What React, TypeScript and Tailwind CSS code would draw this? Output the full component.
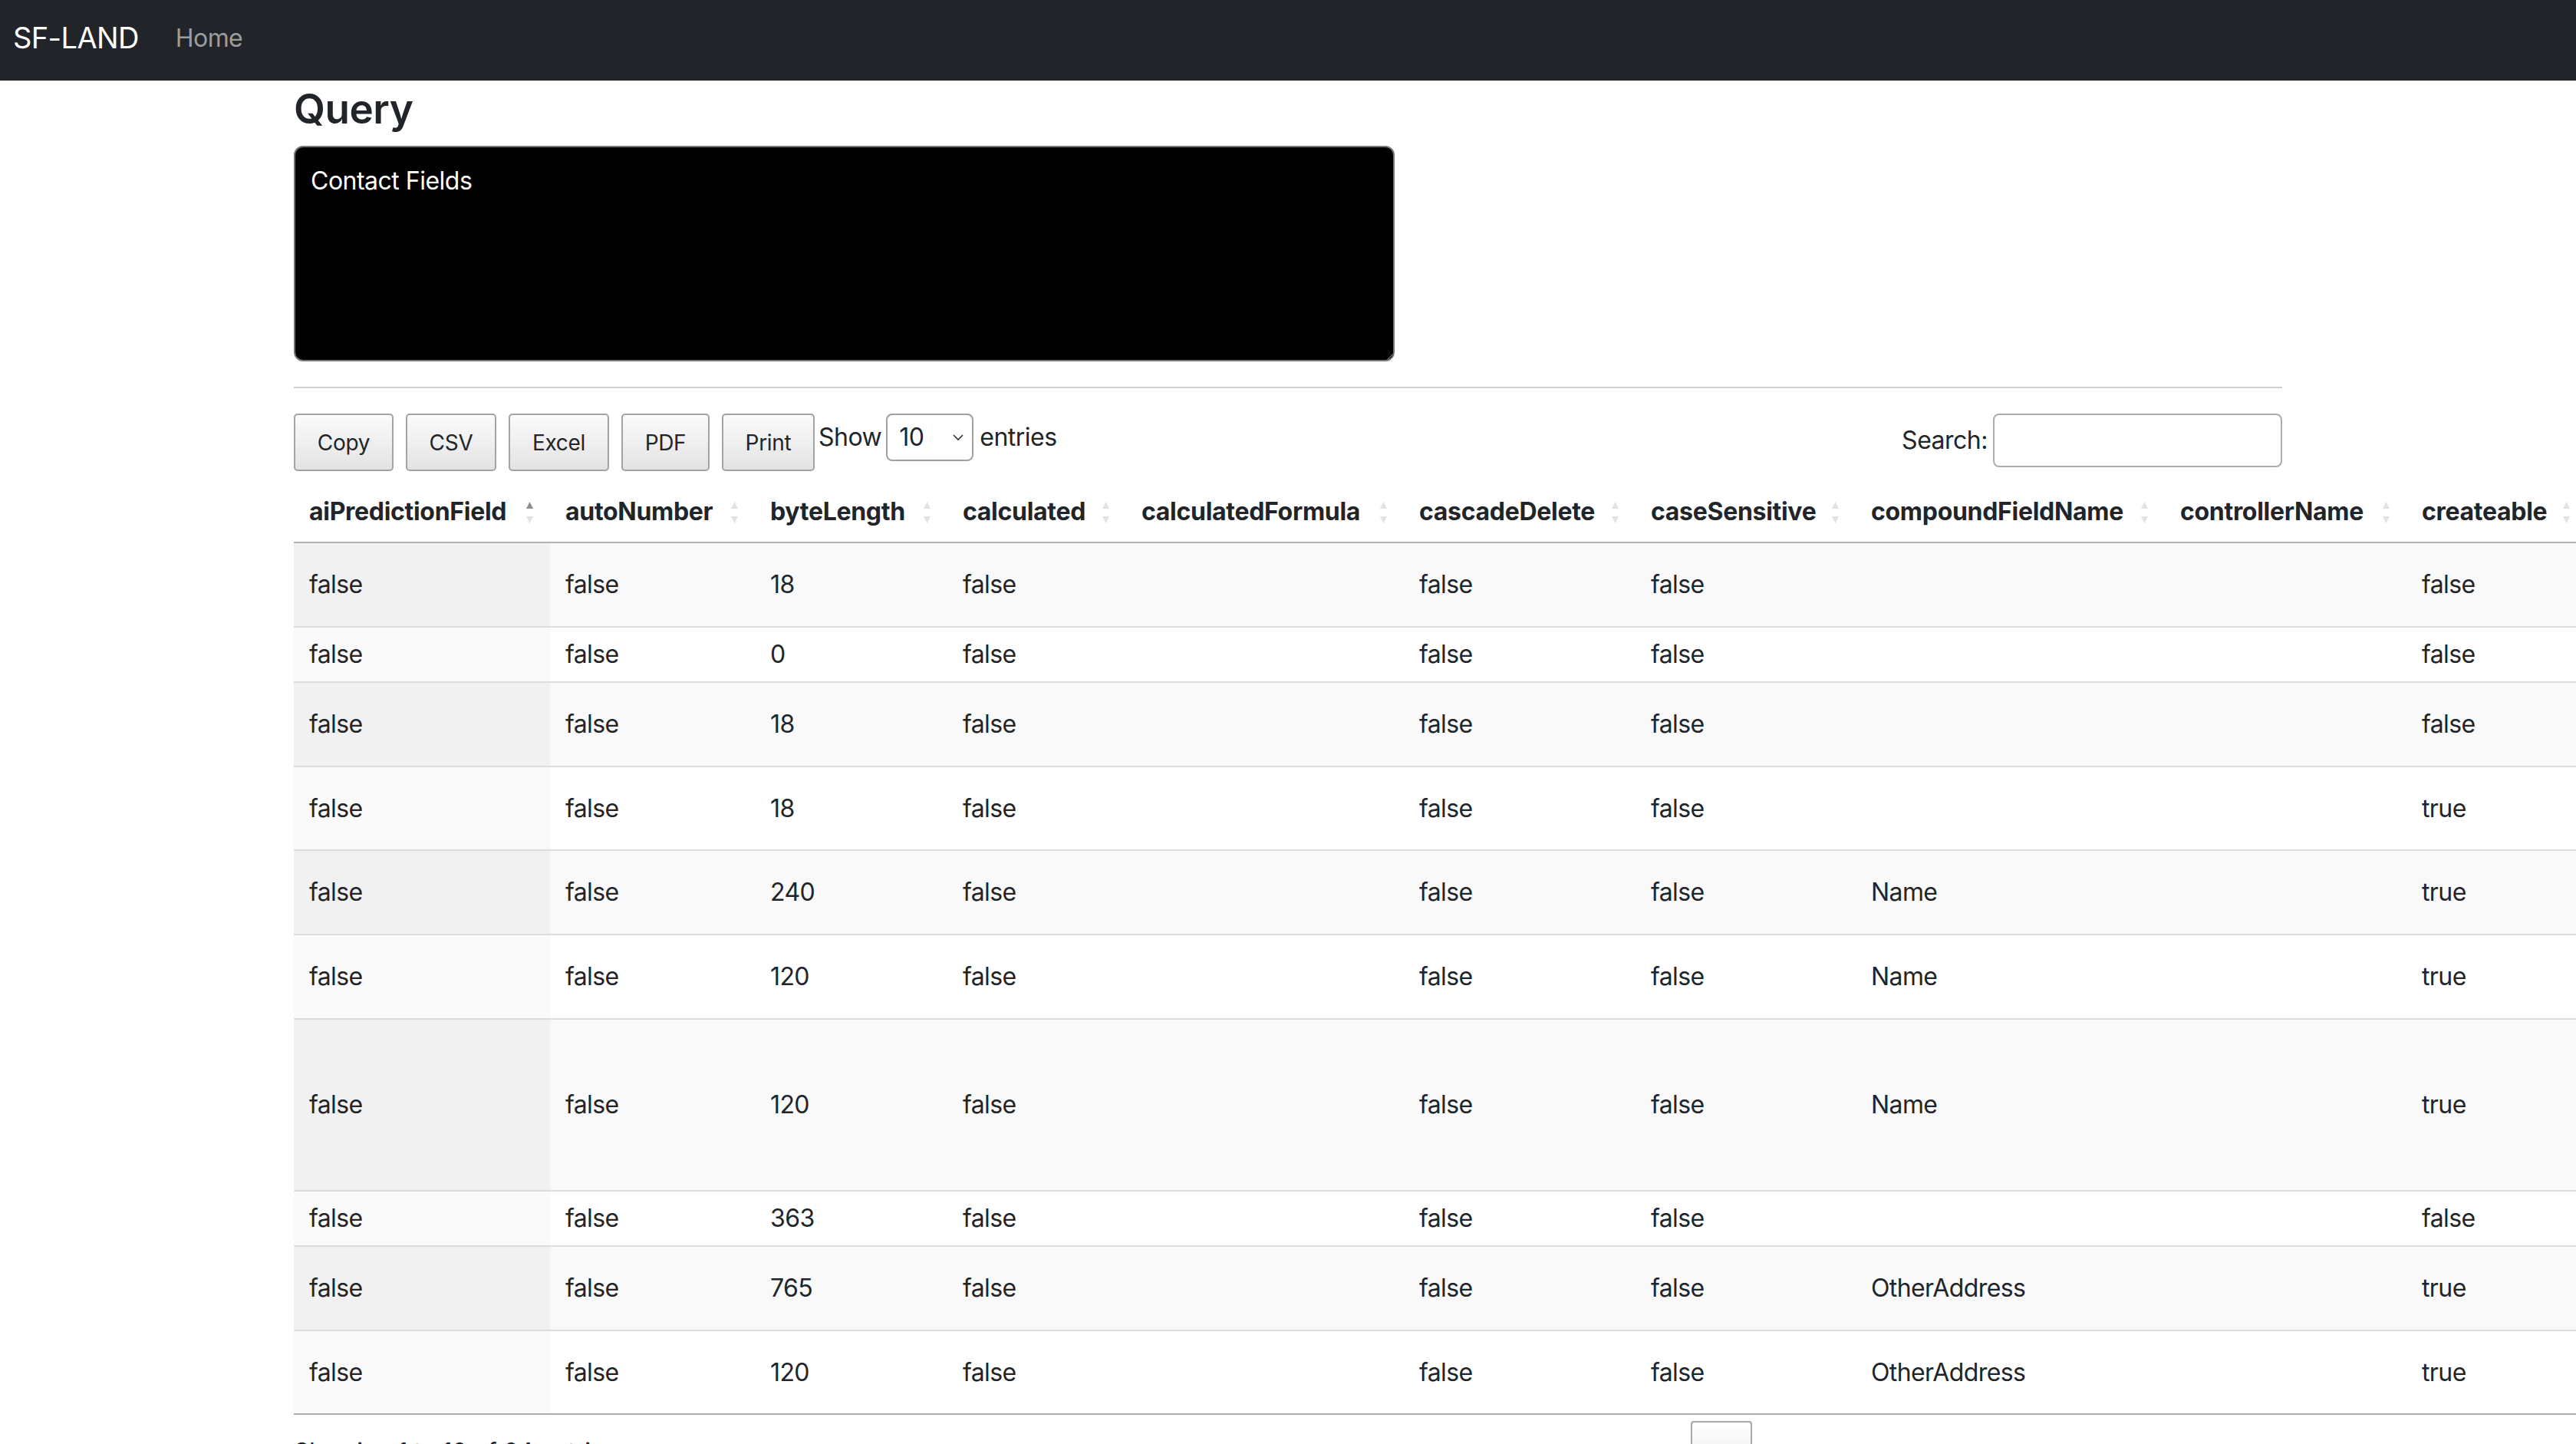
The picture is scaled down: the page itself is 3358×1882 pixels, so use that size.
import React from "react";

type Col = { key: string; label: string; w: string };

const cols: Col[] = [
  { key: "aiPredictionField", label: "aiPredictionField", w: "w-[334px]" },
  { key: "autoNumber", label: "autoNumber", w: "w-[267px]" },
  { key: "byteLength", label: "byteLength", w: "w-[251px]" },
  { key: "calculated", label: "calculated", w: "w-[233px]" },
  { key: "calculatedFormula", label: "calculatedFormula", w: "w-[362px]" },
  { key: "cascadeDelete", label: "cascadeDelete", w: "w-[302px]" },
  { key: "caseSensitive", label: "caseSensitive", w: "w-[287px]" },
  { key: "compoundFieldName", label: "compoundFieldName", w: "w-[403px]" },
  { key: "controllerName", label: "controllerName", w: "w-[315px]" },
  { key: "createable", label: "createable", w: "w-[235px]" },
  { key: "custom", label: "custom", w: "w-[200px]" },
  { key: "defaultValue", label: "defaultValue", w: "w-[300px]" },
];

type Row = { h: string; v: string[] };

const rows: Row[] = [
  { h: "h-[108px]", v: ["false", "false", "18", "false", "", "false", "false", "", "", "false", "false", ""] },
  { h: "h-[72px]", v: ["false", "false", "0", "false", "", "false", "false", "", "", "false", "false", ""] },
  { h: "h-[110px]", v: ["false", "false", "18", "false", "", "false", "false", "", "", "false", "false", ""] },
  { h: "h-[109px]", v: ["false", "false", "18", "false", "", "false", "false", "", "", "true", "false", ""] },
  { h: "h-[110px]", v: ["false", "false", "240", "false", "", "false", "false", "Name", "", "true", "false", ""] },
  { h: "h-[110px]", v: ["false", "false", "120", "false", "", "false", "false", "Name", "", "true", "false", ""] },
  { h: "h-[224px]", v: ["false", "false", "120", "false", "", "false", "false", "Name", "", "true", "false", ""] },
  { h: "h-[72px]", v: ["false", "false", "363", "false", "", "false", "false", "", "", "false", "false", ""] },
  { h: "h-[110px]", v: ["false", "false", "765", "false", "", "false", "false", "OtherAddress", "", "true", "false", ""] },
  { h: "h-[109px]", v: ["false", "false", "120", "false", "", "false", "false", "OtherAddress", "", "true", "false", ""] },
];

function SortIcon({ active }: { active: boolean }) {
  return (
    <svg
      className="absolute top-[26px] right-[22px] w-[9px] h-[29px]"
      viewBox="0 0 9 29"
    >
      <polygon points="0,9 4.5,0 9,9" fill={active ? "#8e8e8e" : "#e2e2e2"} />
      <polygon points="0,19 9,19 4.5,28" fill="#e2e2e2" />
    </svg>
  );
}

const buttons = [
  { label: "Copy", w: "w-[130px]" },
  { label: "CSV", w: "w-[118px]" },
  { label: "Excel", w: "w-[131px]" },
  { label: "PDF", w: "w-[115px]" },
  { label: "Print", w: "w-[121px]" },
];

export default function App() {
  return (
    <div className="w-[3358px] h-[1882px] overflow-hidden bg-white text-[#212529] font-[Inter,sans-serif]">
      <nav className="h-[105px] bg-[#212529] flex items-center pl-[17px] pb-[8px]">
        <span className="text-[38px] leading-[60px] tracking-[-0.6px] text-white mr-[32px]">SF-LAND</span>
        <span className="text-[32px] leading-[48px] tracking-[-0.6px] text-[#9b9d9f] px-[16px] mt-[2px]">Home</span>
      </nav>

      <div className="w-[2640px] mx-auto px-[24px]">
        <h3 className="text-[53px] font-semibold leading-[62px] tracking-[-0.5px] mt-[6px] mb-[17px]">Query</h3>

        <textarea
          className="block w-[1435px] h-[281px] bg-black text-white text-[32px] leading-[48px] tracking-[-0.5px] border-2 border-[#767676] rounded-[12px] pt-[20px] px-[20px] outline-none font-[Inter,sans-serif]"
          defaultValue="Contact Fields"
        />

        <hr className="mt-[33px] mb-[33px] border-0 border-t-2 border-[#cfcfcf]" />

        <div className="flex items-start justify-between">
          <div className="flex items-start">
            <div className="flex gap-[16px]">
              {buttons.map((b) => (
                <button
                  key={b.label}
                  className={`${b.w} h-[75px] border-2 border-[#a3a3a3] rounded-[5px] bg-linear-to-b from-[#fbfbfb] to-[#e3e3e3] text-[28px] tracking-[-0.3px] text-[#212529] flex items-center justify-center`}
                >
                  {b.label}
                </button>
              ))}
            </div>
            <div className="flex items-center h-[62px] ml-[5px] text-[32px] tracking-[-0.5px]">
              <span>Show</span>
              <div className="ml-[6px] w-[114px] h-[62px] border-2 border-[#a0a0a0] rounded-[8px] bg-white flex items-center justify-between pl-[15px] pr-[11px]">
                <span>10</span>
                <svg className="w-[14px] h-[10px]" viewBox="0 0 14 10">
                  <polyline points="1,2 7,8 13,2" fill="none" stroke="#333" strokeWidth="1.6" />
                </svg>
              </div>
              <span className="ml-[8px]">entries</span>
            </div>
          </div>

          <div className="flex items-center text-[32px] tracking-[-0.5px]">
            <span>Search:</span>
            <div className="ml-[7px] w-[377px] h-[70px] border-2 border-[#acacac] rounded-[8px] bg-white" />
          </div>
        </div>

        <table className="mt-[14px] table-fixed border-separate border-spacing-0 w-[3489px] border-b-2 border-[#ababab]">
          <thead>
            <tr>
              {cols.map((c, i) => (
                <th
                  key={c.key}
                  className={`${c.w} relative text-left font-bold text-[32px] leading-[38px] tracking-[-0.3px] pt-[20px] pb-[20px] pl-[20px] pr-[52px] border-b-2 border-[#b2b2b2] whitespace-nowrap`}
                >
                  {c.label}
                  <SortIcon active={i === 0} />
                </th>
              ))}
            </tr>
          </thead>
          <tbody>
            {rows.map((r, ri) => {
              const odd = ri % 2 === 0;
              return (
                <tr key={ri} className={r.h}>
                  {r.v.map((val, ci) => {
                    const bg =
                      ci === 0
                        ? odd
                          ? "bg-[#f1f1f1]"
                          : "bg-[#fafafa]"
                        : odd
                        ? "bg-[#f9f9f9]"
                        : "bg-white";
                    const border = ri > 0 ? "border-t-2 border-[#dddddd]" : "";
                    return (
                      <td
                        key={ci}
                        className={`${bg} ${border} align-middle text-[32px] leading-[38px] tracking-[-0.6px] px-[20px] py-[16px]`}
                      >
                        {val}
                      </td>
                    );
                  })}
                </tr>
              );
            })}
          </tbody>
        </table>

        <div className="flex items-start justify-between text-[32px] leading-[38px] tracking-[-0.5px]">
          <div className="pt-[30px]">Showing 1 to 10 of 64 entries</div>
          <div className="pt-[8px] flex items-start">
            <span className="px-[32px] pt-[30px] pb-[16px] border-2 border-transparent text-[#666666]">Previous</span>
            <span className="ml-[4px] px-[32px] pt-[30px] pb-[16px] border-2 border-[#a8a8a8] rounded-[4px] bg-linear-to-b from-white to-[#e6e6e6]">1</span>
            <span className="ml-[4px] px-[32px] pt-[30px] pb-[16px] border-2 border-transparent">2</span>
            <span className="ml-[4px] px-[32px] pt-[30px] pb-[16px] border-2 border-transparent">3</span>
            <span className="ml-[4px] px-[32px] pt-[30px] pb-[16px] border-2 border-transparent">4</span>
            <span className="ml-[4px] px-[32px] pt-[30px] pb-[16px] border-2 border-transparent">5</span>
            <span className="ml-[4px] px-[32px] pt-[30px] pb-[16px]">…</span>
            <span className="ml-[4px] px-[32px] pt-[30px] pb-[16px] border-2 border-transparent">7</span>
            <span className="ml-[4px] px-[32px] pt-[30px] pb-[16px] border-2 border-transparent">Next</span>
          </div>
        </div>
      </div>
    </div>
  );
}
